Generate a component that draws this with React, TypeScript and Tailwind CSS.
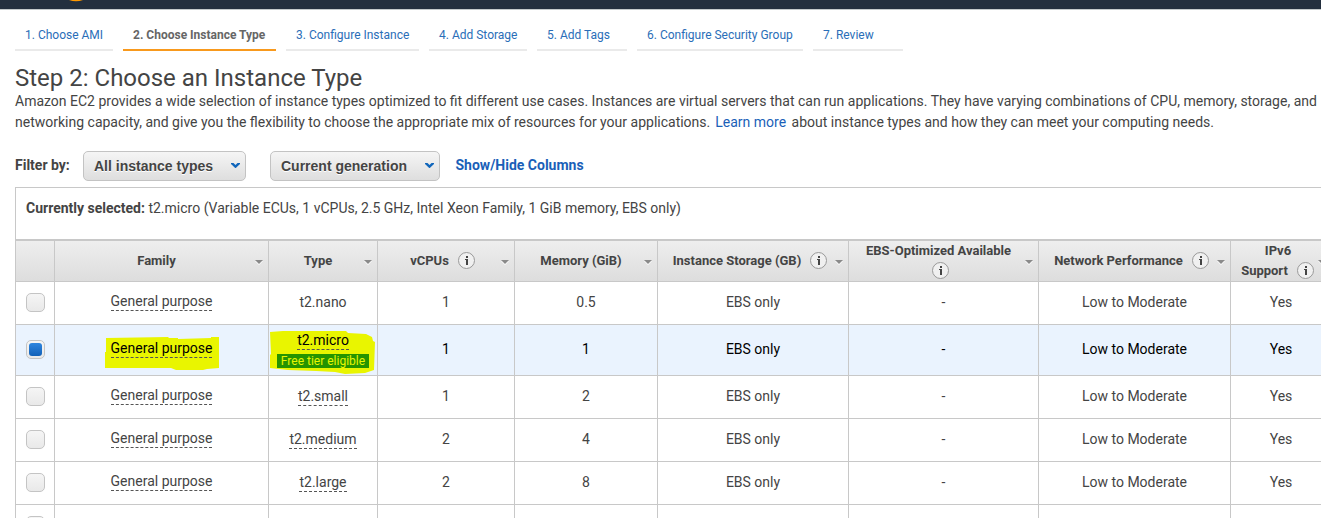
import type { ReactNode } from "react";

const tabs = [
  { label: "1. Choose AMI", width: "w-[98px]" },
  { label: "2. Choose Instance Type", width: "w-[153px]", active: true },
  { label: "3. Configure Instance", width: "w-[133px]" },
  { label: "4. Add Storage", width: "w-[98px]" },
  { label: "5. Add Tags", width: "w-[90px]" },
  { label: "6. Configure Security Group", width: "w-[166px]" },
  { label: "7. Review", width: "w-[90px]" },
];

const columns =
  "grid grid-cols-[39px_214px_109px_137px_143px_191px_190px_192px_101px] w-[1316px]";

type Row = {
  type: string;
  vcpus: string;
  memory: string;
  plain?: boolean;
  selected?: boolean;
};

const rows: Row[] = [
  { type: "t2.nano", vcpus: "1", memory: "0.5", plain: true },
  { type: "t2.micro", vcpus: "1", memory: "1", selected: true },
  { type: "t2.small", vcpus: "1", memory: "2" },
  { type: "t2.medium", vcpus: "2", memory: "4" },
  { type: "t2.large", vcpus: "2", memory: "8" },
];

function InfoIcon() {
  return (
    <svg width="18" height="18" viewBox="0 0 18 18" className="shrink-0">
      <circle cx="8.5" cy="8.5" r="8" fill="#f0f0f0" stroke="#999" strokeWidth="1" />
      <rect x="8" y="4" width="2" height="2" fill="#444" />
      <path d="M7 7h3v6H8V8H7z" fill="#444" />
    </svg>
  );
}

function SortArrow() {
  return (
    <svg width="8" height="6" viewBox="0 0 8 6" className="absolute right-[5px] top-[18px]">
      <path d="M0 2H8L4 6z" fill="#fff" />
      <path d="M0 1H8L4 5z" fill="#8a8a8a" />
    </svg>
  );
}

function HeaderCell({ children }: { children?: ReactNode }) {
  return (
    <div className="relative flex items-center justify-center border-r border-[#c8c8c8] pr-[10px] text-[13px] font-bold leading-5">
      {children}
      {children && <SortArrow />}
    </div>
  );
}

function Cell({ children }: { children?: ReactNode }) {
  return (
    <div className="flex items-center justify-center border-r border-[#c8c8c8] pb-px">
      {children}
    </div>
  );
}

function Select({ label, width }: { label: string; width: string }) {
  return (
    <button
      className={`flex h-[30px] items-center justify-between rounded-[5px] border border-[#c3c3c3] bg-linear-to-b from-[#f5f5f5] to-[#dedede] pl-[10px] pr-[5px] font-['Liberation_Sans',sans-serif] text-[14px] font-bold ${width}`}
    >
      <span className="whitespace-nowrap [text-shadow:0_1px_0_#fff]">{label}</span>
      <svg width="9" height="5" viewBox="0 0 9 5" className="mb-[2px]">
        <path d="M0 0H2.5L4.5 2 6.5 0H9V1L4.8 5H4.2L0 1z" fill="#1166bb" />
      </svg>
    </button>
  );
}

function Checkbox({ checked }: { checked?: boolean }) {
  return (
    <span className="mb-px flex h-[19px] w-[19px] items-center justify-center rounded-[5px] border border-[#c4c4c4] bg-linear-to-b from-[#f5f5f5] to-[#e9e9e9]">
      {checked && (
        <span className="h-[13px] w-[13px] rounded-[3px] bg-linear-to-b from-[#2f86df] to-[#1261b8]" />
      )}
    </span>
  );
}

function TableRow({ row }: { row: Row }) {
  const { selected } = row;
  return (
    <div
      className={`${columns} border-b border-[#c8c8c8] ${
        selected ? "h-[51px] bg-[#eaf3fe] text-black" : "h-[43px] bg-white"
      }`}
    >
      <Cell>
        <Checkbox checked={selected} />
      </Cell>
      <Cell>
        <span className="relative mb-[2px]">
          {selected && (
            <svg
              width="114"
              height="34"
              viewBox="0 0 114 34"
              className="absolute -left-[6px] -top-[3px]"
            >
              <path
                d="M1 1L63 0 64 1H73V2L106 1V0H114V31L102 32 98 33H71L66 31H0V15H1z"
                fill="#e9f500"
              />
            </svg>
          )}
          <span className="relative block h-[18px] border-b border-dashed border-[#555] leading-[17px]">
            General purpose
          </span>
        </span>
      </Cell>
      <Cell>
        {row.plain ? (
          <span>{row.type}</span>
        ) : selected ? (
          <span className="relative flex flex-col items-center">
            <svg
              width="105"
              height="43"
              viewBox="0 0 105 43"
              className="absolute -left-[7px] -top-[1px]"
            >
              <path
                d="M0 1L13 0H76L78 2 96 3 102 6 103 10 105 11 104 39 95 42 75 43 65 41 46 40 18 39 0 37V24L1 23z"
                fill="#e9f500"
              />
            </svg>
            <span className="relative block h-[18px] border-b border-dashed border-[#555] leading-[17px]">
              {row.type}
            </span>
            <span className="relative mt-[4px] h-[14px] w-[92px] bg-[#259400] text-center text-[12px] leading-[14px] text-[#e9f500]">
              Free tier eligible
            </span>
          </span>
        ) : (
          <span className="block h-[18px] border-b border-dashed border-[#555] leading-[17px]">
            {row.type}
          </span>
        )}
      </Cell>
      <Cell>{row.vcpus}</Cell>
      <Cell>{row.memory}</Cell>
      <Cell>EBS only</Cell>
      <Cell>-</Cell>
      <Cell>Low to Moderate</Cell>
      <Cell>Yes</Cell>
    </div>
  );
}

export default function App() {
  return (
    <div className="h-[518px] w-[1321px] overflow-hidden bg-white font-['Roboto',sans-serif] text-[14px] text-[#444]">
      <header className="h-[10px] border-b border-[#c3c8ca] bg-[#232f3e]">
        <svg width="14" height="2" viewBox="0 0 14 2" className="ml-[69px]">
          <path d="M0 0H14Q7 2.5 0 0z" fill="#ff9900" />
        </svg>
      </header>

      <nav className="flex h-[41px] gap-[10px] pl-[15px] pt-[14px]">
        {tabs.map((tab) => (
          <a
            key={tab.label}
            className={`h-[27px] whitespace-nowrap border-b-2 pl-[10px] text-[12px] leading-[22px] ${tab.width} ${
              tab.active
                ? "border-[#f8991d] font-bold text-[#666]"
                : "border-[#eaeaea] text-[#2a6eb8]"
            }`}
          >
            {tab.label}
          </a>
        ))}
      </nav>

      <section className="h-[100px] whitespace-nowrap pl-[15px] pt-[12px]">
        <h1 className="h-[28px] text-[24px] leading-[30px]">Step 2: Choose an Instance Type</h1>
        <p className="leading-[21px]">
          Amazon EC2 provides a wide selection of instance types optimized to fit different use
          cases. Instances are virtual servers that can run applications. They have varying
          combinations of CPU, memory, storage, and
          <br />
          networking capacity, and give you the flexibility to choose the appropriate mix of
          resources for your applications.{" "}
          <a className="ml-[1.5px] mr-[2px] text-[#1a5fb8]">Learn more</a> about instance types and
          how they can meet your computing needs.
        </p>
      </section>

      <div className="flex h-[36px] items-start pl-[15px]">
        <span className="w-[68px] font-bold leading-[28px]">Filter by:</span>
        <Select label="All instance types" width="w-[163px]" />
        <span className="w-[24px]" />
        <Select label="Current generation" width="w-[170px]" />
        <a className="ml-[15.5px] font-bold leading-[28px] text-[#1a5fb8]">Show/Hide Columns</a>
      </div>

      <main className="ml-[15px] w-[1317px] border-l border-t border-[#c8c8c8]">
        <p className="h-[51px] pl-[10px] leading-[41px]">
          <b>Currently selected:</b> t2.micro (Variable ECUs, 1 vCPUs, 2.5 GHz, Intel Xeon Family, 1
          GiB memory, EBS only)
        </p>
        <div
          className={`${columns} h-[43px] border-b border-t-2 border-[#c8c8c8] bg-linear-to-b from-[#eeeeee] to-[#dddddd]`}
        >
          <HeaderCell />
          <HeaderCell>Family</HeaderCell>
          <HeaderCell>Type</HeaderCell>
          <HeaderCell>
            <span className="ml-[4px] mr-[9px]">vCPUs</span>
            <InfoIcon />
          </HeaderCell>
          <HeaderCell>Memory (GiB)</HeaderCell>
          <HeaderCell>
            <span className="ml-[5px] mr-[9px]">Instance Storage (GB)</span>
            <InfoIcon />
          </HeaderCell>
          <HeaderCell>
            <div className="flex flex-col items-center">
              <span>EBS-Optimized Available</span>
              <span className="flex h-5 items-center pl-[6px]">
                <InfoIcon />
              </span>
            </div>
          </HeaderCell>
          <HeaderCell>
            <span className="ml-[5px] mr-[9px]">Network Performance</span>
            <InfoIcon />
          </HeaderCell>
          <HeaderCell>
            <div className="flex flex-col items-center pl-[4px]">
              <span>IPv6</span>
              <span className="flex h-5 items-center">
                <span className="mr-[9px]">Support</span>
                <InfoIcon />
              </span>
            </div>
          </HeaderCell>
        </div>
        {rows.map((row) => (
          <TableRow key={row.type} row={row} />
        ))}
        <div className={`${columns} h-[43px]`}>
          <Cell>
            <Checkbox />
          </Cell>
          <Cell />
          <Cell />
          <Cell />
          <Cell />
          <Cell />
          <Cell />
          <Cell />
          <Cell />
        </div>
      </main>
    </div>
  );
}
